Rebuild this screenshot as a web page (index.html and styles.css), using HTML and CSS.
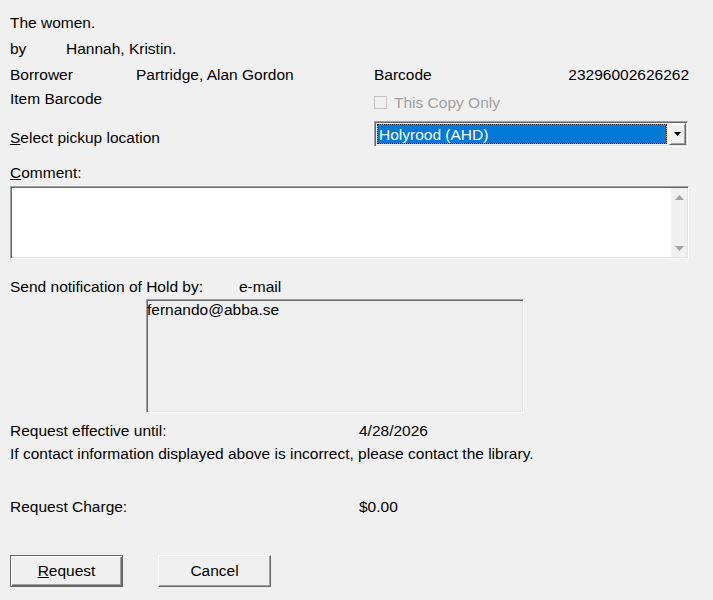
FILE: index.html
```html
<!DOCTYPE html>
<html lang="en">
<head>
<meta charset="utf-8">
<title>Request</title>
<link rel="stylesheet" href="styles.css">
</head>
<body>
<div class="dialog">
  <div class="row title">The women.</div>
  <div class="row by"><span class="by-label">by</span><span>Hannah, Kristin.</span></div>
  <div class="row borrower">
    <span>Borrower</span>
    <span>Partridge, Alan Gordon</span>
    <span>Barcode</span>
    <span class="num">23296002626262</span>
  </div>
  <div class="row item">
    <span>Item Barcode</span>
    <label class="check"><span class="box"></span><span class="check-text">This Copy Only</span></label>
  </div>
  <div class="row pickup">
    <span class="pickup-label"><u>S</u>elect pickup location</span>
    <div class="select">
      <div class="select-value"><span>Holyrood (AHD)</span></div>
      <div class="select-btn">
        <svg width="7" height="4" viewBox="0 0 7 4"><path d="M0 0H7L3.5 4Z" fill="#000"/></svg>
      </div>
    </div>
  </div>
  <div class="comment-label"><u>C</u>omment:</div>
  <div class="comment-box">
    <div class="comment-text"></div>
    <div class="scrollbar">
      <svg width="9" height="5" viewBox="0 0 9 5"><path d="M4.5 0L9 5H0Z" fill="#a3a3a3"/></svg>
      <svg width="9" height="5" viewBox="0 0 9 5"><path d="M0 0H9L4.5 5Z" fill="#a3a3a3"/></svg>
    </div>
  </div>
  <div class="row notify"><span>Send notification of Hold by:</span><span>e-mail</span></div>
  <div class="email-box">fernando@abba.se</div>
  <div class="row until"><span>Request effective until:</span><span>4/28/2026</span></div>
  <div class="row contact">If contact information displayed above is incorrect, please contact the library.</div>
  <div class="row charge"><span>Request Charge:</span><span>$0.00</span></div>
  <div class="buttons">
    <button class="btn default"><span class="btn-inner"><u>R</u>equest</span></button>
    <button class="btn"><span class="btn-inner">Cancel</span></button>
  </div>
</div>
</body>
</html>
```

FILE: styles.css
```css
html, body {
  margin: 0;
  background: #f0f0f0;
}
body {
  font: 15.5px/17px "Liberation Sans", Arial, sans-serif;
  color: #000;
}
.dialog {
  width: 713px;
  box-sizing: border-box;
  padding: 14px 24px 0 10px;
}
.row {
  display: grid;
  white-space: nowrap;
}
.by {
  margin-top: 9px;
  grid-template-columns: 56px 1fr;
}
.borrower {
  margin-top: 9px;
  grid-template-columns: 126px 238px 1fr auto;
}
.num {
  text-align: right;
}
.item {
  margin-top: 7px;
  grid-template-columns: 364px 1fr;
}
.check {
  display: flex;
  align-items: center;
  margin-top: 4px;
  color: #a0a0a0;
}
.box {
  width: 11px;
  height: 11px;
  border: 1px solid #c4c4c4;
  background: #f0f0f0;
  margin-right: 7px;
}
.pickup {
  margin-top: 10px;
  grid-template-columns: 364px 314px;
  height: 26px;
}
.pickup-label {
  padding-top: 8px;
}
.select {
  display: flex;
  box-sizing: border-box;
  height: 26px;
  padding: 1px;
  border: 1px solid;
  border-color: #a0a0a0 #ffffff #ffffff #a0a0a0;
  box-shadow: inset 1px 1px 0 #696969, inset -1px -1px 0 #e3e3e3;
  background: #f0f0f0;
}
.select-value {
  flex: 1;
  margin: 1px;
  border: 1px dotted #000;
  background: linear-gradient(#0078d7, #0078d7) padding-box, #d08a30 border-box;
  color: #fff;
  display: flex;
  align-items: center;
  padding-left: 1px;
}
.select-btn {
  width: 17px;
  box-sizing: border-box;
  border-top: 1px solid #f0f0f0;
  border-left: 1px solid #f0f0f0;
  border-right: 1px solid #696969;
  border-bottom: 1px solid #696969;
  box-shadow: inset 1px 1px 0 #ffffff, inset -1px -1px 0 #a0a0a0;
  display: flex;
  align-items: center;
  justify-content: center;
  margin-left: 1px;
}
.comment-label {
  margin-top: 17px;
}
.comment-box {
  margin-top: 5px;
  height: 73px;
  box-sizing: border-box;
  display: flex;
  border: 1px solid;
  border-color: #a0a0a0 #ffffff #ffffff #a0a0a0;
  box-shadow: inset 1px 1px 0 #696969, inset -1px -1px 0 #e3e3e3;
  background: #fff;
  padding: 1px;
}
.comment-text {
  flex: 1;
}
.scrollbar {
  width: 16px;
  background: #f0f0f0;
  display: flex;
  flex-direction: column;
  justify-content: space-between;
  align-items: center;
  padding: 7px 0 6px;
}
.notify {
  margin-top: 19px;
  grid-template-columns: 229px 1fr;
}
.email-box {
  margin: 4px 0 0 136px;
  width: 378px;
  height: 114px;
  box-sizing: border-box;
  border: 1px solid;
  border-color: #a0a0a0 #ffffff #ffffff #a0a0a0;
  box-shadow: inset 1px 1px 0 #696969, inset -1px -1px 0 #e3e3e3;
  padding: 1px 1px 1px 0;
}
.until {
  margin-top: 9px;
  grid-template-columns: 349px 1fr;
}
.contact {
  margin-top: 6px;
}
.charge {
  margin-top: 36px;
  grid-template-columns: 349px 1fr;
}
.buttons {
  margin-top: 40px;
  display: flex;
  gap: 35px;
}
.btn {
  width: 113px;
  height: 32px;
  box-sizing: border-box;
  padding: 0 0 2px;
  margin: 0;
  font: inherit;
  color: #000;
  background: #f0f0f0;
  border: 1px solid;
  border-color: #ffffff #696969 #696969 #ffffff;
  box-shadow: inset -1px -1px 0 #a0a0a0;
  display: flex;
  align-items: center;
  justify-content: center;
}
.btn.default {
  border: 1px solid #646464;
  box-shadow: inset 1px 1px 0 #ffffff, inset -1px -1px 0 #696969, inset -2px -2px 0 #a0a0a0;
}
.btn-inner {
  line-height: 17px;
}
```
